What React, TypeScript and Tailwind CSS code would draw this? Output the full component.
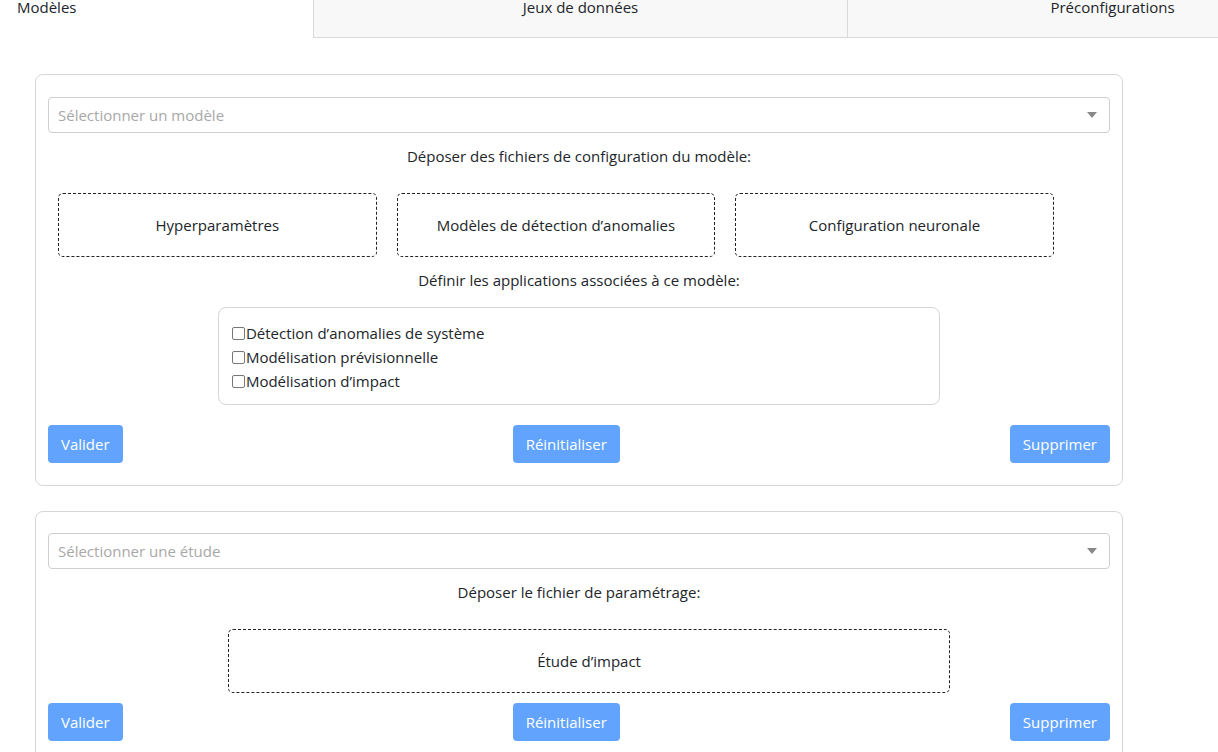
const font = { fontFamily: '"Open Sans", "Noto Sans", sans-serif' };

function Chevron() {
  return (
    <svg width="10" height="6" viewBox="0 0 10 6" className="shrink-0">
      <path d="M0 0h10L5 6z" fill="#888" />
    </svg>
  );
}

function SelectBox({ placeholder }: { placeholder: string }) {
  return (
    <div className="h-[36px] border border-[#cfcfcf] rounded-[4px] flex items-center justify-between pl-[9px] pr-[12px] text-[#a8a8a8]">
      <span>{placeholder}</span>
      <Chevron />
    </div>
  );
}

function DropZone({ label, className = "" }: { label: string; className?: string }) {
  return (
    <div
      className={
        "h-[64px] border border-dashed border-[#222] rounded-[5px] flex items-center justify-center " +
        className
      }
    >
      {label}
    </div>
  );
}

function Buttons() {
  return (
    <div className="flex justify-between items-center">
      {["Valider", "Réinitialiser", "Supprimer"].map((b) => (
        <button
          key={b}
          className="h-[38px] px-[13px] bg-[#62a4fd] text-white rounded-[4px]"
        >
          {b}
        </button>
      ))}
    </div>
  );
}

export default function App() {
  return (
    <div
      className="w-[1218px] h-[752px] overflow-hidden bg-white text-[15px] leading-[24px] text-[#212529]"
      style={font}
    >
      <div className="flex h-[38px] w-[1377px]">
        <div className="w-[313px] bg-white pl-[17px]">
          <div className="-mt-[5px]">Modèles</div>
        </div>
        <div className="w-[534px] bg-[#f8f8f8] border-l border-b border-[#d9d9d9] text-center">
          <div className="-mt-[5px]">Jeux de données</div>
        </div>
        <div className="w-[530px] bg-[#f8f8f8] border-l border-b border-[#d9d9d9] text-center">
          <div className="-mt-[5px]">Préconfigurations</div>
        </div>
      </div>

      <div className="pl-[35px] pt-[36px] w-[1123px]">
        <div className="border border-[#d6d6d6] rounded-[8px] px-[12px] pt-[22px] pb-[22px]">
          <SelectBox placeholder="Sélectionner un modèle" />
          <p className="text-center mt-[11px]">Déposer des fichiers de configuration du modèle:</p>
          <div className="flex mt-[15px]">
            <DropZone label="Hyperparamètres" className="w-[30%] m-[10px]" />
            <DropZone label="Modèles de détection d’anomalies" className="w-[30%] m-[10px]" />
            <DropZone label="Configuration neuronale" className="w-[30%] m-[10px]" />
          </div>
          <p className="text-center mt-px">Définir les applications associées à ce modèle:</p>
          <div className="w-[68%] mx-auto mt-[15px] border border-[#d6d6d6] rounded-[8px] px-[13px] pt-[13px] pb-[11px]">
            {["Détection d’anomalies de système", "Modélisation prévisionnelle", "Modélisation d’impact"].map((t) => (
              <label key={t} className="flex items-center h-[24px]">
                <span className="w-[13px] h-[13px] border-[1.5px] border-[#777] rounded-[2px] mr-px" />
                {t}
              </label>
            ))}
          </div>
          <div className="mt-[20px]">
            <Buttons />
          </div>
        </div>

        <div className="mt-[25px] border border-[#d6d6d6] rounded-[8px] px-[12px] pt-[21px] pb-[22px]">
          <SelectBox placeholder="Sélectionner une étude" />
          <p className="text-center mt-[11px]">Déposer le fichier de paramétrage:</p>
          <DropZone label="Étude d’impact" className="w-[68%] ml-[180px] mt-[25px]" />
          <div className="mt-[10px]">
            <Buttons />
          </div>
        </div>
      </div>
    </div>
  );
}
